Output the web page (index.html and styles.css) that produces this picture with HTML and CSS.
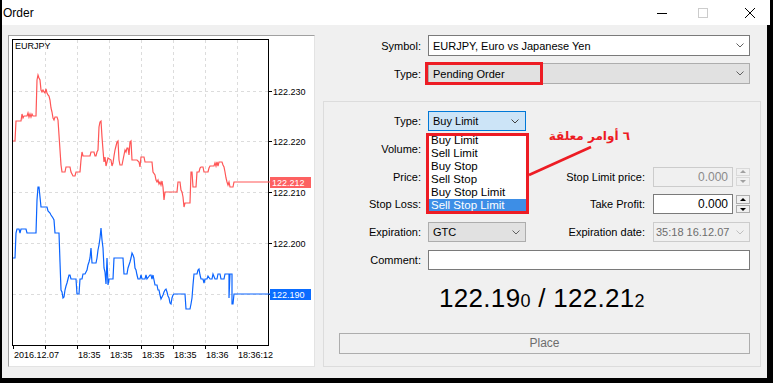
FILE: index.html
```html
<!DOCTYPE html>
<html>
<head>
<meta charset="utf-8">
<title>Order</title>
<link rel="stylesheet" href="styles.css">
</head>
<body>
<div class="window">
  <div class="titlebar">
    <span class="title">Order</span>
    <div class="controls">
      <svg class="ctl-min" width="10" height="10" viewBox="0 0 10 10"><path d="M0 5.5 H10" stroke="#000" stroke-width="1"/></svg>
      <svg class="ctl-max" width="10" height="10" viewBox="0 0 10 10"><rect x="0.5" y="0.5" width="9" height="9" fill="none" stroke="#cccccc"/></svg>
      <svg class="ctl-close" width="10" height="10" viewBox="0 0 10 10"><path d="M0 0 L10 10 M10 0 L0 10" stroke="#000" stroke-width="1"/></svg>
    </div>
  </div>
  <div class="client">
    <div class="chart-panel">
      <svg class="chart" width="305" height="330" viewBox="9 36 305 330">
        <g class="grid" stroke="#dcdcdc" stroke-dasharray="3 3" stroke-width="1">
          <path d="M45.5 40 V345 M77.5 40 V345 M109.5 40 V345 M141.5 40 V345 M173.5 40 V345 M205.5 40 V345 M237.5 40 V345"/>
          <path d="M13 91.5 H268 M13 141.5 H268 M13 192.5 H268 M13 243.5 H268 M13 294.5 H268"/>
        </g>
        <rect x="12.5" y="39.5" width="256" height="306" fill="none" stroke="#000"/>
        <path d="M268 91.5 H272 M268 141.5 H272 M268 192.5 H272 M268 243.5 H272 M268 294.5 H272" stroke="#000"/>
        <path d="M13.5 345 V349 M45.5 345 V349 M77.5 345 V349 M109.5 345 V349 M141.5 345 V349 M173.5 345 V349 M205.5 345 V349 M237.5 345 V349" stroke="#000"/>
        <text class="sym" x="15" y="49">EURJPY</text>
        <g class="axis">
          <text x="273" y="94.5">122.230</text>
          <text x="273" y="144.5">122.220</text>
          <text x="273" y="196">122.210</text>
          <text x="273" y="246.5">122.200</text>
          <text x="14" y="358">2016.12.07</text>
          <text x="78" y="358">18:35</text>
          <text x="110" y="358">18:35</text>
          <text x="142" y="358">18:35</text>
          <text x="174" y="358">18:35</text>
          <text x="206" y="358">18:36</text>
          <text x="238" y="358">18:36:12</text>
        </g>
        <polyline fill="none" stroke="#ff5656" stroke-width="1.2" points="13,141 15,141 16,121 21,121 22,114 23,118 24,116 27,116 28,113 29,117 30,114 31,117 32,114 33,116 36,116 37,80 38,75 39,78 40,80 41,90 42,92 43,90 44,92 45,93 46,89 47,93 48,95 49,96 50,100 51,108 52,112 53,118 54,120 55,117 57,117 58,120 59,135 60,150 61,165 62,172 65,172 66,167 70,167 71,172 73,176 75,176 76,172 80,172 81,160 82,152 83,156 90,156 91,152 94,152 95,156 96,156 97,152 98,150 99,127 100,122 101,121 102,137 103,150 104,162 105,157 106,166 107,162 108,158 111,160 112,166 113,163 114,156 115,150 116,146 117,142 118,141 119,160 120,165 122,165 123,160 124,155 125,150 126,152 127,148 128,148 129,155 130,142 131,141 132,160 137,160 139,162 140,167 141,157 144,157 145,162 152,162 153,172 155,175 156,180 157,182 158,180 159,184 160,182 161,185 162,181 163,187 164,200 165,192 177,192 178,182 180,182 181,190 182,192 183,197 184,207 185,203 190,203 191,172 192,172 193,187 196,187 197,172 199,172 200,168 201,167 203,167 204,172 208,172 209,168 210,166 214,166 215,163 216,166 217,162 218,166 219,162 222,162 223,165 224,167 225,172 226,178 227,182 228,185 229,182 230,187 233,187 234,182 270,182"/>
        <polyline fill="none" stroke="#0a64ff" stroke-width="1.2" points="13,258 15,258 16,233 17,229 19,229 20,233 21,229 26,229 27,233 36,233 37,200 38,187 39,187 40,197 41,207 47,207 48,211 50,213 51,215 53,218 54,220 55,233 59,233 60,262 61,290 62,292 63,298 64,297 65,290 66,286 67,283 68,279 69,275 70,275 71,279 76,279 77,294 79,294 80,279 82,279 83,274 85,274 86,272 87,270 88,265 89,262 90,258 91,248 92,263 96,263 97,258 98,250 99,245 100,238 101,228 102,240 103,248 104,268 105,272 106,284 107,258 108,285 109,279 113,279 114,258 123,258 124,274 127,274 128,268 129,265 130,262 131,258 132,253 133,255 134,258 135,268 136,270 137,275 138,279 140,279 141,275 142,279 145,279 146,275 147,279 150,275 151,275 152,279 153,275 154,280 155,285 157,285 158,290 159,290 160,295 161,299 162,297 163,295 164,292 165,290 166,289 167,292 168,296 169,298 170,303 171,304 172,298 173,295 174,294 185,294 186,309 190,309 191,304 192,298 193,285 194,274 197,274 198,270 199,269 200,275 201,279 203,279 204,283 205,279 207,279 208,276 210,279 212,279 213,274 215,279 217,279 218,274 220,274 221,279 224,279 225,274 229,274 229,298 230,274 232,274 232,304 233,304 234,294 270,294"/>
        <rect x="270" y="177" width="41" height="11" fill="#fd6161"/>
        <text class="tag" x="272" y="185.5">122.212</text>
        <rect x="270" y="289" width="41" height="11" fill="#0a6cff"/>
        <text class="tag" x="272" y="297.5">122.190</text>
      </svg>
    </div>
    <div class="form">
      <div class="top-grid">
        <div class="lbl">Symbol:</div>
        <div class="combo combo-white"><span>EURJPY, Euro vs Japanese Yen</span><svg class="chev" width="8" height="5" viewBox="0 0 8 5"><path d="M0.5 0.5 L4 4 L7.5 0.5" fill="none" stroke="#606060"/></svg></div>
        <div class="lbl">Type:</div>
        <div class="combo combo-gray"><span>Pending Order</span><svg class="chev" width="8" height="5" viewBox="0 0 8 5"><path d="M0.5 0.5 L4 4 L7.5 0.5" fill="none" stroke="#606060"/></svg><div class="redmark"></div></div>
      </div>
      <div class="group">
        <div class="fields">
          <div class="lbl">Type:</div>
          <div class="combo combo-focus"><span>Buy Limit</span><svg class="chev" width="8" height="5" viewBox="0 0 8 5"><path d="M0.5 0.5 L4 4 L7.5 0.5" fill="none" stroke="#404040"/></svg>
            <div class="dropdown">
              <div class="opt">Buy Limit</div>
              <div class="opt">Sell Limit</div>
              <div class="opt">Buy Stop</div>
              <div class="opt">Sell Stop</div>
              <div class="opt">Buy Stop Limit</div>
              <div class="opt opt-sel">Sell Stop Limit</div>
            </div>
          </div>
          <div></div><div></div>

          <div class="lbl">Volume:</div><div></div><div></div><div></div>

          <div class="lbl">Price:</div><div></div>
          <div class="lbl lbl2">Stop Limit price:</div>
          <div class="spin spin-off"><div class="field">0.000</div><div class="arrows"><span class="arr"><i class="up"></i></span><span class="arr"><i class="down"></i></span></div></div>

          <div class="lbl">Stop Loss:</div><div></div>
          <div class="lbl lbl2">Take Profit:</div>
          <div class="spin"><div class="field">0.000</div><div class="arrows"><span class="arr"><i class="up"></i></span><span class="arr"><i class="down"></i></span></div></div>

          <div class="lbl">Expiration:</div>
          <div class="combo combo-gray"><span>GTC</span><svg class="chev" width="8" height="5" viewBox="0 0 8 5"><path d="M0.5 0.5 L4 4 L7.5 0.5" fill="none" stroke="#606060"/></svg></div>
          <div class="lbl lbl2">Expiration date:</div>
          <div class="combo combo-off"><span>35:18 16.12.07</span><svg class="chev" width="8" height="5" viewBox="0 0 8 5"><path d="M0.5 0.5 L4 4 L7.5 0.5" fill="none" stroke="#bfbfbf"/></svg></div>

          <div class="lbl">Comment:</div>
          <div class="comment"></div>
        </div>
        <div class="quote">122.19<span class="pip">0</span> / 122.21<span class="pip">2</span></div>
        <div class="place">Place</div>

        <svg class="pointer" width="80" height="40" viewBox="0 0 80 40"><path d="M5 33 L67 5" stroke="#ed1c24" stroke-width="2.6"/></svg>
        <span class="note" dir="rtl">٦ أوامر معلقة</span>
      </div>
    </div>
  </div>
</div>
</body>
</html>
```
FILE: styles.css
```css
* { box-sizing: border-box; }
html, body { margin: 0; padding: 0; }
body {
  background: #000;
  width: 773px;
  height: 383px;
  overflow: hidden;
  font-family: "Liberation Sans", Arial, sans-serif;
  font-size: 11px;
  color: #000;
}
.window {
  margin-left: 2px;
  width: 768px;
  height: 378px;
}
.titlebar {
  height: 25px;
  background: #fff;
  display: flex;
  align-items: center;
  justify-content: space-between;
  padding-left: 1px;
}
.title { font-size: 12px; }
.controls {
  display: flex;
  align-items: center;
  padding-right: 15px;
}
.ctl-max { margin-left: 31px; }
.ctl-close { margin-left: 37px; }

.client {
  width: 765px;
  height: 353px;
  background: #f0f0f0;
  display: flex;
  align-items: flex-start;
  padding: 10px 0 0 6px;
}
.chart-panel {
  width: 307px;
  height: 332px;
  background: #fff;
  border: 1px solid;
  border-color: #a0a0a0 #e3e3e3 #e3e3e3 #a0a0a0;
}
.chart { display: block; }
.chart text {
  font-family: "Liberation Sans", Arial, sans-serif;
  font-size: 9px;
  fill: #000;
}
.chart .tag { fill: #fff; }

.form {
  margin-left: 8px;
  width: 438px;
}
.top-grid {
  display: grid;
  grid-template-columns: 105px 322px;
  grid-auto-rows: 21px;
  row-gap: 7px;
}
.lbl {
  text-align: right;
  padding-right: 7px;
  display: flex;
  align-items: center;
  justify-content: flex-end;
  white-space: nowrap;
}
.lbl2 { padding-right: 8px; }

.combo {
  position: relative;
  height: 100%;
  border: 1px solid #7a7a7a;
  display: flex;
  align-items: center;
  justify-content: space-between;
  padding: 0 5px 0 4px;
  white-space: nowrap;
}
.combo-white { background: #fff; }
.combo-gray { background: #e1e1e1; border-color: #adadad; }
.combo-focus { background: #cce4f7; border-color: #0078d7; padding-right: 6px; }
.combo-off { background: #f0f0f0; border-color: #cccccc; color: #6d6d6d; padding-left: 2px; }
.chev { flex: none; }

.redmark {
  position: absolute;
  left: -4px;
  top: -2px;
  width: 118px;
  height: 23px;
  border: 3px solid #ed1c24;
}

.group {
  position: relative;
  margin-top: 17px;
  height: 266px;
  border: 1px solid #dcdcdc;
  padding: 9px 10px 0 0;
}
.fields {
  display: grid;
  grid-template-columns: 104px 98px 127px 97px;
  grid-auto-rows: 20px;
  row-gap: 7.8px;
}
.comment {
  grid-column: 2 / 5;
  background: #fff;
  border: 1px solid #7a7a7a;
}

.dropdown {
  position: absolute;
  left: -3px;
  top: 21px;
  width: 103px;
  height: 81px;
  background: #fff;
  padding: 1px 1px 0 1px;
  z-index: 2;
}
.dropdown::after {
  content: "";
  position: absolute;
  inset: 0;
  border: 3px solid #ed1c24;
}
.opt {
  height: 13px;
  line-height: 13px;
  padding-left: 4px;
  font-size: 11.5px;
  white-space: nowrap;
}
.opt-sel { background: #3d8ee6; color: #fff; }

.spin {
  display: flex;
  gap: 3px;
  height: 100%;
}
.field {
  width: 80px;
  height: 100%;
  background: #fff;
  border: 1px solid #7a7a7a;
  text-align: right;
  padding-right: 4px;
  line-height: 18px;
  font-size: 12px;
}
.arrows {
  width: 14px;
  display: flex;
  flex-direction: column;
  gap: 1px;
  padding: 1px 0;
}
.arr {
  flex: 1;
  border: 1px solid #adadad;
  background: #f0f0f0;
  display: flex;
  align-items: center;
  justify-content: center;
}
.up, .down {
  width: 0;
  height: 0;
  border-left: 3px solid transparent;
  border-right: 3px solid transparent;
}
.up { border-bottom: 3px solid #000; }
.down { border-top: 3px solid #000; }
.spin-off .field { background: #f0f0f0; border-color: #cccccc; color: #8a8a8a; }
.spin-off .arr { border-color: #d9d9d9; }
.spin-off .up { border-bottom-color: #a0a0a0; }
.spin-off .down { border-top-color: #a0a0a0; }

.quote {
  margin: 10px -10px 0 0;
  height: 36px;
  line-height: 36px;
  text-align: center;
  font-size: 26px;
  letter-spacing: 0.3px;
}
.pip { font-size: 18px; }

.place {
  margin: 17px 0 0 15px;
  width: 411px;
  height: 21px;
  border: 1px solid #adadad;
  color: #6d6d6d;
  text-align: center;
  line-height: 19px;
  font-size: 12px;
}

.pointer {
  position: absolute;
  left: 200px;
  top: 40px;
  z-index: 3;
}
.note {
  position: absolute;
  right: 130px;
  top: 27px;
  font-family: "DejaVu Sans", sans-serif;
  font-weight: bold;
  font-size: 12px;
  line-height: 14px;
  color: #ed1c24;
  white-space: nowrap;
}
```
